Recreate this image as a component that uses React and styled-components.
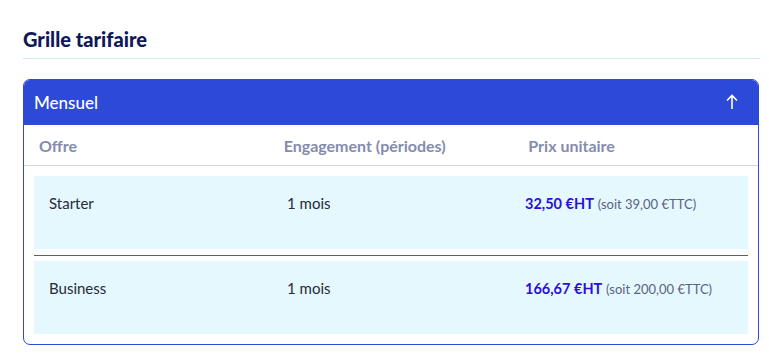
import React from "react";
import styled, { createGlobalStyle } from "styled-components";

const Global = createGlobalStyle`
  html, body { margin: 0; padding: 0; background: #ffffff; }
  body { font-family: Lato, "Noto Sans", sans-serif; }
`;

const Page = styled.div`
  padding: 27px 9px 0 23px;
`;

const Title = styled.h2`
  margin: 0;
  font-size: 20px;
  font-weight: 900;
  color: #0f1858;
  line-height: 24px;
  padding-bottom: 7px;
  border-bottom: 1px solid #c9eef6;
`;

const Card = styled.section`
  margin-top: 20px;
  width: 736px;
  box-sizing: border-box;
  border: 1px solid #2c49d8;
  border-radius: 7px;
  overflow: hidden;
`;

const CardHeader = styled.div`
  background: #2c49d8;
  height: 46px;
  margin: -1px -1px 0 -1px;
  padding: 0 21px 0 11px;
  display: flex;
  align-items: center;
  justify-content: space-between;
  color: #ffffff;
  font-size: 17px;
  font-weight: 500;
`;

const ArrowBtn = styled.span`
  display: flex;
  align-items: center;
`;

const HeadRow = styled.div`
  display: grid;
  grid-template-columns: repeat(3, 1fr);
  height: 40px;
  align-items: center;
  border-bottom: 1px solid #d3d3e3;
`;

const HeadCell = styled.div`
  padding-left: 15px;
  font-size: 16px;
  font-weight: 700;
  color: #848cae;
`;

const Body = styled.div`
  padding: 10px 10px 10px;
`;

const Row = styled.div`
  display: grid;
  grid-template-columns: repeat(3, 1fr);
  background: #e5f8fd;
  height: 73px;
  align-items: start;
  padding-top: 17px;
  box-sizing: border-box;
`;

const Sep = styled.div`
  height: 1px;
  background: #3c5bd6;
  margin: 6px 0 5px;
`;

const Cell = styled.div`
  padding-left: 15px;
  font-size: 15px;
  line-height: 20px;
  color: #262a3a;
`;

const Price = styled.span`
  font-weight: 700;
  color: #2a10d6;
  font-size: 14.5px;
`;

const Ttc = styled.span`
  font-size: 13px;
  color: #5b6186;
`;

const rows = [
  { offre: "Starter", engagement: "1 mois", ht: "32,50 €HT", ttc: "(soit 39,00 €TTC)" },
  { offre: "Business", engagement: "1 mois", ht: "166,67 €HT", ttc: "(soit 200,00 €TTC)" },
];

export default function App() {
  return (
    <>
      <Global />
      <Page>
        <Title>Grille tarifaire</Title>
        <Card>
          <CardHeader>
            <span>Mensuel</span>
            <ArrowBtn>
              <svg width="12" height="16" viewBox="0 0 12 16" fill="none" stroke="#fff" strokeWidth="1.6">
                <path d="M6 15V1.5M1 6.5L6 1.5L11 6.5" />
              </svg>
            </ArrowBtn>
          </CardHeader>
          <HeadRow>
            <HeadCell>Offre</HeadCell>
            <HeadCell>Engagement (périodes)</HeadCell>
            <HeadCell>Prix unitaire</HeadCell>
          </HeadRow>
          <Body>
            {rows.map((r, i) => (
              <React.Fragment key={r.offre}>
                {i > 0 && <Sep />}
                <Row>
                  <Cell>{r.offre}</Cell>
                  <Cell>{r.engagement}</Cell>
                  <Cell>
                    <Price>{r.ht}</Price> <Ttc>{r.ttc}</Ttc>
                  </Cell>
                </Row>
              </React.Fragment>
            ))}
          </Body>
        </Card>
      </Page>
    </>
  );
}
